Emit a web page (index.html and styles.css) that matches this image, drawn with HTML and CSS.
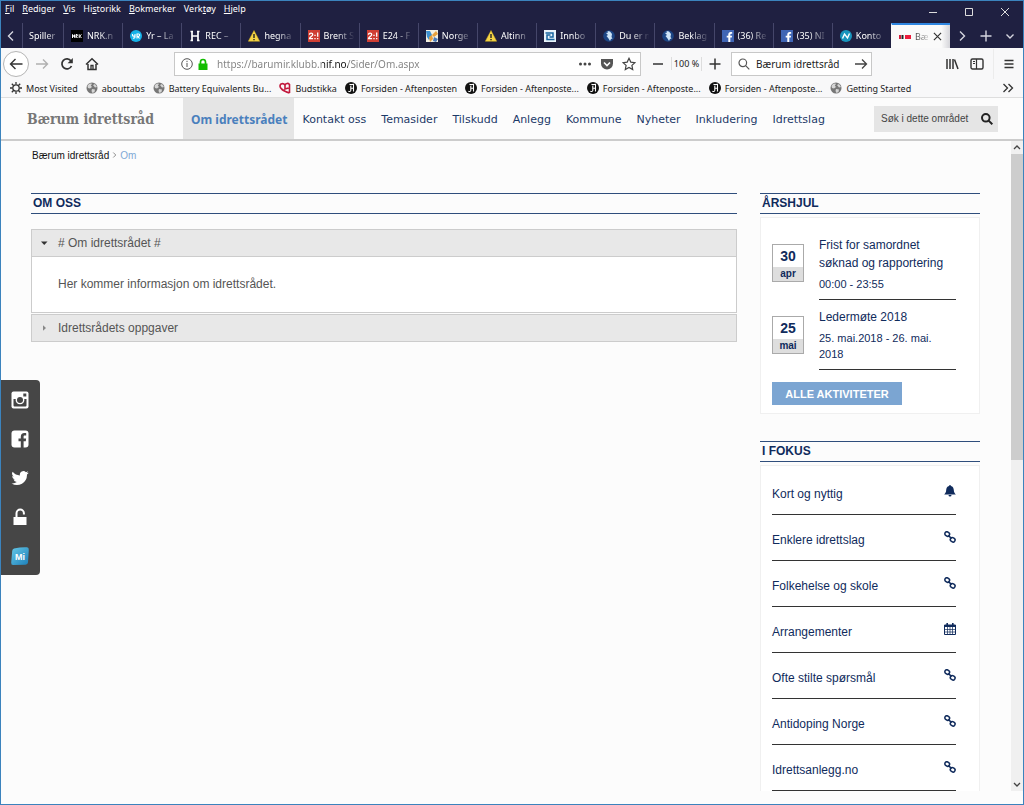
FILE: index.html
```
<!DOCTYPE html>
<html lang="no">
<head>
<meta charset="utf-8">
<title>Bærum idrettsråd</title>
<link rel="stylesheet" href="styles.css">
</head>
<body>
<svg class="defs" aria-hidden="true">
  <symbol id="warn" viewBox="0 0 12 12"><path d="M6 .5 11.7 11.3H.3z" fill="#f5d547" stroke="#cfa91c" stroke-width=".5"/><path d="M6 4v4M6 9v1.300" stroke="#222" stroke-width="1.400"/></symbol>
  <symbol id="fb" viewBox="0 0 12 12"><path d="M0 0h12v12H0z" fill="#4065b4"/><path d="M8.300 12V7.600h1.500l.300-1.800H8.300V4.700c0-.600.300-.900 1-.900h.900V2.200C9.900 2.100 9.300 2 8.700 2 7.200 2 6.300 2.900 6.300 4.500v1.300H4.700v1.800h1.600V12z" fill="#fff"/></symbol>
  <symbol id="lion" viewBox="0 0 12 12"><circle cx="6" cy="6" r="5.800" fill="#1c4584"/><path d="M4.500 1 7 1.500l2 2.500-.5 3 1 1.500-1.500.5L7 11 5.500 8.500 3.500 6 5 5 3 3 5 2.500z" fill="#cfe4f7"/></symbol>
  <symbol id="globe" viewBox="0 0 12 12"><circle cx="6" cy="6" r="5.500" fill="#777"/><path d="M1.500 4C3 1.500 5 1.200 6 2L4.800 3.500 6 5 4 6.500 2 6zM7 3l2-1 2 3-2 .5zM6 7l3 .5L8.500 10l-2 1L5.500 9z" fill="#d5d5d5"/></symbol>
  <symbol id="aften" viewBox="0 0 12 12"><circle cx="6" cy="6" r="6" fill="#111"/><path d="M4.500 2.200c1.800 1 3.800 0 4 0v7.300M5.800 4v4.500C5.500 9.800 4 9.800 3.300 9M5.800 6.200h2.500" stroke="#fff" stroke-width="1.100" fill="none"/></symbol>
  <symbol id="e24" viewBox="0 0 12 12"><path d="M0 0h12v12H0z" fill="#cf3e33"/><path d="M1.500 4.700c0-2.200 3.200-2.200 3.200 0 0 1.300-3 2.500-3.200 4H5M7 4.700v1.300M7 8v1.300M9.700 2.500v4.200M9.700 8v1.300" stroke="#fff" stroke-width="1.300" fill="none"/></symbol>
  <symbol id="chain" viewBox="0 0 12 12"><g fill="none" stroke="#102b5c" stroke-width="1.500"><rect x=".8" y="1" width="4.800" height="4" rx="1.900" transform="rotate(35 3.200 3)"/><rect x="6.300" y="6.800" width="4.800" height="4" rx="1.900" transform="rotate(35 8.700 8.800)"/><path d="m4.300 4.600 3.300 2.700"/></g></symbol>
  <symbol id="glass" viewBox="0 0 12 12"><circle cx="4.800" cy="4.800" r="3.800" fill="none" stroke="currentColor" stroke-width="var(--w,1.200)"/><path d="m7.600 7.600 3.700 3.700" stroke="currentColor" stroke-width="var(--w,1.200)"/></symbol>
</svg>
<div class="window">
  <header class="titlebar">
    <nav class="menubar">
      <a href="#"><u>F</u>il</a><a href="#"><u>R</u>ediger</a><a href="#"><u>V</u>is</a><a href="#">Hi<u>s</u>torikk</a><a href="#"><u>B</u>okmerker</a><a href="#">Verk<u>t</u>øy</a><a href="#"><u>H</u>jelp</a>
    </nav>
    <div class="wincontrols">
      <button aria-label="Minimer"><svg viewBox="0 0 10 10"><path d="M1 5.500h8"/></svg></button>
      <button aria-label="Maksimer"><svg viewBox="0 0 10 10"><path d="M1.500 1.500h7v7h-7z"/></svg></button>
      <button aria-label="Lukk"><svg viewBox="0 0 10 10"><path d="m1 1 8 8M9 1 1 9"/></svg></button>
    </div>
  </header>

  <div class="tabbar">
    <button class="scroll-left" aria-label="Rull til venstre"><svg viewBox="0 0 12 12"><path d="M8 1.500 3.500 6 8 10.500"/></svg></button>
    <a class="tab first" href="#"><span>Spiller</span></a>
    <div class="tabs">
      <a class="tab" href="#"><svg viewBox="0 0 12 12"><path d="M0 0h12v12H0z" fill="#000"/><path d="M1.500 8V4.500l2 3V4.500M5 8V4.500h1.200V6L5 6.200 6.500 8M8.200 4.300V8M10.500 4.500 8.700 6l1.800 2" stroke="#fff" fill="none"/></svg><span>NRK.n</span></a>
      <a class="tab" href="#"><svg viewBox="0 0 12 12"><circle cx="6" cy="6" r="6" fill="#16b2e8"/><path d="M2.500 4v1.500c0 1 2.500 1 2.500 0V4v3c0 1.200-1.200 1.300-2 1M7 8.500V4h1.800c1.200 0 1.200 2.200 0 2.200H7.500L9.500 8.500" stroke="#fff" fill="none" stroke-width="1.100"/></svg><span>Yr – La</span></a>
      <a class="tab" href="#"><svg viewBox="0 0 12 12"><path d="M3 1v10M9 1v10M3 6h6M1.500 1.500H4M8 1.500h2.500M1.500 10.500H4M8 10.500h2.500" stroke="#fff" stroke-width="1.700"/></svg><span>REC –</span></a>
      <a class="tab" href="#"><svg><use href="#warn"/></svg><span>hegna</span></a>
      <a class="tab" href="#"><svg><use href="#e24"/></svg><span>Brent S</span></a>
      <a class="tab" href="#"><svg><use href="#e24"/></svg><span>E24 - F</span></a>
      <a class="tab" href="#"><svg viewBox="0 0 12 12"><path d="M0 0h12v12H0z" fill="#f3efe2"/><path d="M0 1h4l2 4-3 5-2-3z" fill="#3d8fd0"/><path d="m6 5 4-4 2 3-4 3zM3 7l3-2 1 4-3 3z" fill="#e9a03c"/><path d="m8 7 4 2-2 3-3-1z" fill="#4a79b8"/></svg><span>Norge</span></a>
      <a class="tab" href="#"><svg><use href="#warn"/></svg><span>Altinn</span></a>
      <a class="tab" href="#"><svg viewBox="0 0 12 12"><path d="M0 0h12v12H0z" fill="#e9f3fa"/><path d="M1.500 3H9v4H5.500M10.500 9.500H3V5h3.500" stroke="#17649f" stroke-width="1.500" fill="none"/></svg><span>Innbo</span></a>
      <a class="tab" href="#"><svg><use href="#lion"/></svg><span>Du er n</span></a>
      <a class="tab" href="#"><svg><use href="#lion"/></svg><span>Beklag</span></a>
      <a class="tab" href="#"><svg><use href="#fb"/></svg><span>(36) Re</span></a>
      <a class="tab" href="#"><svg><use href="#fb"/></svg><span>(35) NI</span></a>
      <a class="tab" href="#"><svg viewBox="0 0 12 12"><circle cx="6" cy="6" r="6" fill="#1995bd"/><path d="M2.500 8.500 4.500 4l3 4 2-4.500" stroke="#fff" stroke-width="1.400" fill="none"/></svg><span>Konto</span></a>
      <a class="tab active" href="#"><svg viewBox="0 0 12 12"><path d="M0 4h2v4H0z" fill="#d61d3c"/><path d="M2.500 4h2v4h-2z" fill="#222"/><path d="M6 4h6v4H6z" fill="#ec1c3c"/></svg><span>Bæ</span><i class="close"><svg viewBox="0 0 10 10"><path d="m1 1 8 8M9 1 1 9"/></svg></i></a>
    </div>
    <div class="tabtools">
      <button aria-label="Rull til høyre"><svg viewBox="0 0 12 12"><path d="M4 1.500 8.500 6 4 10.500"/></svg></button>
      <button aria-label="Ny fane"><svg viewBox="0 0 12 12"><path d="M6 .5v11M.5 6h11"/></svg></button>
      <button aria-label="Alle faner"><svg viewBox="0 0 12 12"><path d="m2.500 4.500 3.500 3.500 3.500-3.500"/></svg></button>
    </div>
  </div>

  <div class="toolbar">
    <button class="back" aria-label="Tilbake"><svg viewBox="0 0 14 14"><path d="M13.500 7h-12M6.500 2l-5 5 5 5"/></svg></button>
    <button class="tool dim" aria-label="Frem"><svg viewBox="0 0 14 14"><path d="M1 7h11.500M8 2.500 12.500 7 8 11.500"/></svg></button>
    <button class="tool" aria-label="Oppdater"><svg viewBox="0 0 14 14"><path d="M11.500 9A5 5 0 1 1 11 4" stroke-width="1.700"/><path d="M12.800 1v5.200H7.600z" fill="#333" stroke="none"/></svg></button>
    <button class="tool" aria-label="Hjem"><svg viewBox="0 0 14 14"><path d="M1 7.500 7 1.800l6 5.700M3 7v5.500h8V7" stroke-width="1.500"/><path d="M6 13V8.500h2V13" stroke-width="1.300"/></svg></button>
    <div class="urlbar">
      <svg class="info" viewBox="0 0 12 12"><circle cx="6" cy="6" r="5.300"/><path d="M6 5v4M6 2.800v1.300"/></svg>
      <svg class="lock" viewBox="0 0 12 12"><path d="M1.500 5.500h9V12h-9z" fill="#12bc00"/><path d="M3.500 6V4a2.500 2.500 0 0 1 5 0v2" fill="none" stroke="#12bc00" stroke-width="1.700"/></svg>
      <input class="url" aria-label="Adresse" value="https://barumir.klubb.nif.no/Sider/Om.aspx">
      <svg class="dots" viewBox="0 0 14 14"><g fill="#444"><circle cx="2.500" cy="7" r="1.500"/><circle cx="7" cy="7" r="1.500"/><circle cx="11.500" cy="7" r="1.500"/></g></svg>
      <svg viewBox="0 0 14 14"><path d="M1 2h12v4.500a6 6 0 0 1-12 0z" fill="#555"/><path d="m4 5.500 3 3 3-3" fill="none" stroke="#fff" stroke-width="1.600"/></svg>
      <svg viewBox="0 0 14 14"><path d="m7 1.300 1.800 3.800 4.100.5-3 2.800.8 4.100L7 10.500l-3.700 2 .8-4.100-3-2.800 4.100-.5z" fill="none" stroke="#444" stroke-width="1.200"/></svg>
    </div>
    <button class="tool zoomout" aria-label="Zoom ut"><svg viewBox="0 0 14 14"><path d="M2 7h10" stroke-width="1.500"/></svg></button>
    <button class="zoomlevel">100 %</button>
    <button class="tool zoomin" aria-label="Zoom inn"><svg viewBox="0 0 14 14"><path d="M1.500 7h11M7 1.500v11" stroke-width="1.500"/></svg></button>
    <div class="searchbar">
      <svg viewBox="0 0 12 12"><use href="#glass"/></svg>
      <input aria-label="Søk" value="Bærum idrettsråd">
      <svg class="go" viewBox="0 0 14 14"><path d="M1 7h11.500M8 2.500 12.500 7 8 11.500" fill="none" stroke="#444" stroke-width="1.300"/></svg>
    </div>
    <div class="righttools">
      <button class="tool" aria-label="Bibliotek"><svg viewBox="0 0 14 14"><path d="M2 2v10M5 2v10M8 2v10M9.500 2.500 13 12" stroke-width="1.500"/></svg></button>
      <button class="tool" aria-label="Sidestolpe"><svg viewBox="0 0 14 14"><rect x="1" y="2" width="12" height="10" rx="1.500" stroke-width="1.400"/><path d="M6.500 2v10M3 4.500h2M3 6.500h2" stroke-width="1.200"/></svg></button>
      <button class="tool menu" aria-label="Meny"><svg viewBox="0 0 14 14"><path d="M2.500 3.500h9M2.500 7h9M2.500 10.500h9" stroke-width="1.300"/></svg></button>
    </div>
  </div>

  <div class="bookmarks">
    <a href="#"><svg viewBox="0 0 12 12"><circle cx="6" cy="6" r="3.200" fill="none" stroke="#333" stroke-width="1.300"/><path d="M6 0v2.500M6 9.500V12M0 6h2.500M9.500 6H12M1.800 1.800l1.700 1.700M8.500 8.500l1.700 1.700M1.800 10.200l1.700-1.700M8.500 3.500l1.700-1.700" stroke="#333" stroke-width="1.300"/></svg>Most Visited</a>
    <a href="#"><svg><use href="#globe"/></svg>abouttabs</a>
    <a href="#"><svg><use href="#globe"/></svg>Battery Equivalents Bu...</a>
    <a href="#"><svg viewBox="0 0 12 12"><path d="M10.500 11V2.500C9 .8 7 1.200 6 3 4.500 1 1 1.200 1 4.200 1 7 4 8.500 10.500 11M6 3v4l3.500-1" fill="none" stroke="#c2183c" stroke-width="1.600"/></svg>Budstikka</a>
    <a href="#"><svg><use href="#aften"/></svg>Forsiden - Aftenposten</a>
    <a href="#"><svg><use href="#aften"/></svg>Forsiden - Aftenposte...</a>
    <a href="#"><svg><use href="#aften"/></svg>Forsiden - Aftenposte...</a>
    <a href="#"><svg><use href="#aften"/></svg>Forsiden - Aftenposte...</a>
    <a href="#"><svg><use href="#globe"/></svg>Getting Started</a>
    <button class="more" aria-label="Flere bokmerker"><svg viewBox="0 0 12 12"><path d="m1.500 2 4 4-4 4M6.500 2l4 4-4 4" fill="none" stroke="#333" stroke-width="1.300"/></svg></button>
  </div>

  <div class="site">
    <header class="sitehead">
      <a class="brand" href="#">Bærum idrettsråd</a>
      <nav class="mainnav">
        <a class="current" href="#">Om idrettsrådet</a><a href="#">Kontakt oss</a><a href="#">Temasider</a><a href="#">Tilskudd</a><a href="#">Anlegg</a><a href="#">Kommune</a><a href="#">Nyheter</a><a href="#">Inkludering</a><a href="#">Idrettslag</a>
      </nav>
      <form class="sitesearch">
        <input aria-label="Søk i dette området" placeholder="Søk i dette området">
        <button type="button" aria-label="Søk"><svg viewBox="0 0 12 12"><use href="#glass"/></svg></button>
      </form>
    </header>

    <div class="scroller">
      <div class="content">
        <nav class="crumbs"><a href="#">Bærum idrettsråd</a><svg viewBox="0 0 6 8"><path d="m1.500 1 3 3-3 3"/></svg><span>Om</span></nav>
        <div class="columns">
          <main>
            <h2>OM OSS</h2>
            <div class="accordion">
              <button aria-expanded="true"><svg viewBox="0 0 8 8"><path d="M1 2.500h6.500L4.250 6z" fill="#333"/></svg># Om idrettsrådet #</button>
              <p>Her kommer informasjon om idrettsrådet.</p>
              <button aria-expanded="false"><svg viewBox="0 0 8 8"><path d="M3 1.300v5.400L6 4z" fill="#888"/></svg>Idrettsrådets oppgaver</button>
            </div>
          </main>
          <aside>
            <section>
              <h2>ÅRSHJUL</h2>
              <div class="card events">
                <div class="event">
                  <div class="date"><b>30</b><span>apr</span></div>
                  <div class="info"><a href="#">Frist for samordnet søknad og rapportering</a><span>00:00 - 23:55</span></div>
                </div>
                <div class="event">
                  <div class="date"><b>25</b><span>mai</span></div>
                  <div class="info"><a href="#">Ledermøte 2018</a><span>25. mai.2018 - 26. mai. 2018</span></div>
                </div>
                <button class="all">ALLE AKTIVITETER</button>
              </div>
            </section>
            <section>
              <h2>I FOKUS</h2>
              <div class="card focus">
                <a href="#">Kort og nyttig<svg viewBox="0 0 12 12"><path d="M6 0c.6 0 .9.400.9.900C9 1.300 9.700 3 9.800 5c.100 2.200.700 3.300 2 4.500H.2C1.500 8.300 2.100 7.200 2.200 5 2.300 3 3 1.300 5.100.9 5.100.4 5.400 0 6 0M4.500 10h3a1.500 1.600 0 0 1-3 0" fill="#102b5c"/></svg></a>
                <a href="#">Enklere idrettslag<svg><use href="#chain"/></svg></a>
                <a href="#">Folkehelse og skole<svg><use href="#chain"/></svg></a>
                <a href="#">Arrangementer<svg viewBox="0 0 12 12"><g fill="none" stroke="#102b5c"><path d="M.5 2h11v9.500H.5z"/><path d="M0 3h12" stroke-width="2"/><path d="M3.200 0v3M8.800 0v3" stroke-width="1.600"/><path d="M.5 6.500h11M.5 9h11M3.500 4v7.500M6 4v7.500M8.500 4v7.500" stroke-width=".7"/></g></svg></a>
                <a href="#">Ofte stilte spørsmål<svg><use href="#chain"/></svg></a>
                <a href="#">Antidoping Norge<svg><use href="#chain"/></svg></a>
                <a href="#">Idrettsanlegg.no<svg><use href="#chain"/></svg></a>
              </div>
            </section>
          </aside>
        </div>
      </div>
      <div class="scrollbar"><svg viewBox="0 0 8 8"><path d="m1 5.500 3-3 3 3"/></svg><div class="track"><div class="thumb"></div></div><svg viewBox="0 0 8 8"><path d="m1 2.500 3 3 3-3"/></svg></div>
    </div>
  </div>

  <nav class="social">
    <a href="#" aria-label="Instagram"><svg viewBox="0 0 18 18"><rect x=".5" y=".5" width="17" height="17" rx="2" fill="#fff"/><path d="M2.500 8h2.200a4.400 4.400 0 1 0 8.600 0h2.200v6.500a1 1 0 0 1-1 1h-11a1 1 0 0 1-1-1z" fill="#464646"/><circle cx="9" cy="9" r="3" fill="#464646"/><path d="M12.300 2.500h3v3h-3z" fill="#464646"/></svg></a>
    <a href="#" aria-label="Facebook"><svg viewBox="0 0 18 18"><rect x=".5" y=".5" width="17" height="17" rx="3" fill="#fff"/><path d="M9.800 18v-6.800H7.500V8.600h2.300V6.700c0-2.300 1.400-3.600 3.500-3.600.9 0 1.700.1 1.900.100v2.400h-1.300c-1.100 0-1.300.5-1.300 1.200v1.800h2.500l-.300 2.600h-2.200V18z" fill="#464646"/></svg></a>
    <a href="#" aria-label="Twitter"><svg viewBox="0 0 24 24"><path d="M23.600 4.900c-.8.400-1.700.6-2.700.8a4.700 4.700 0 0 0 2-2.600c-.9.500-1.900.9-3 1.100a4.700 4.700 0 0 0-8 4.300A13.400 13.400 0 0 1 2.200 3.600a4.700 4.700 0 0 0 1.500 6.300c-.8 0-1.500-.2-2.100-.6 0 2.300 1.600 4.200 3.800 4.700-.7.200-1.400.2-2.100.1a4.700 4.700 0 0 0 4.400 3.200A9.500 9.500 0 0 1 .7 19.200a13.400 13.400 0 0 0 20.600-11.900c.9-.6 1.700-1.500 2.300-2.400" fill="#fff"/></svg></a>
    <a href="#" aria-label="Logg inn"><svg viewBox="0 0 18 18"><path d="M2.500 9h13v8h-13z" fill="#fff"/><path d="M5.500 9.500V5.200a3.700 3.700 0 0 1 7.400 0v1.300" fill="none" stroke="#fff" stroke-width="2"/></svg></a>
    <a href="#" aria-label="Min idrett"><svg viewBox="0 0 18 18"><defs><linearGradient id="mi" x2="1" y2="1"><stop offset="0" stop-color="#65c8e8"/><stop offset="1" stop-color="#1d7fb8"/></linearGradient></defs><path d="M3 1.500Q10 0 16 .3 18 .5 17.800 3L17 15.500q-.2 2-2.500 2.200L2 18Q0 18 .2 15.500L1.200 4Q1.300 2 3 1.500" fill="url(#mi)"/><text x="9" y="12.500" text-anchor="middle" class="mi">Mi</text></svg></a>
  </nav>
</div>
</body>
</html>
```
FILE: styles.css
```
* { box-sizing: border-box; }
body {
  margin: 0;
  font-family: "Liberation Sans", Arial, sans-serif;
  color: #102b5c;
}
a { color: inherit; text-decoration: none; }
button, input { font: inherit; color: inherit; border: 0; background: none; padding: 0; margin: 0; min-width: 0; }
input { outline: 0; }
svg { flex: none; width: 12px; height: 12px; }
.defs { position: absolute; width: 0; height: 0; }

.window {
  position: relative;
  height: 100vh;
  display: flex;
  flex-direction: column;
  border: 1px solid #3b83bd;
  background: #fcfcfc;
  overflow: hidden;
}

/* Browser chrome */
.titlebar, .tabbar, .toolbar, .bookmarks { font-family: "Noto Sans", "Open Sans", sans-serif; font-size: 9px; flex: none; }
.titlebar { height: 22px; display: flex; justify-content: space-between; background: #1f2041; color: #fff; }
.menubar { display: flex; gap: 8px; padding-left: 4px; line-height: 15px; }
.wincontrols { display: flex; gap: 26px; padding-right: 13px; }
.wincontrols svg { display: block; width: 10px; height: 10px; fill: none; stroke: #ddd; }

.tabbar { height: 25px; display: flex; background: #1f2041; color: #fff; }
.tabbar button svg { display: block; fill: none; stroke: #d5d5df; stroke-width: 1.4; }
.scroll-left { width: 21px; padding-left: 4px; }
.tabs { flex: 1; display: flex; min-width: 0; }
.tab { flex: 1 1 0; min-width: 0; display: flex; align-items: center; gap: 4px; padding: 0 1px 0 7px; border-left: 1px solid #45466a; }
.tab span { flex: 1; overflow: hidden; white-space: nowrap; mask-image: linear-gradient(to right, #000 35%, transparent 90%); }
.tab.first { flex: 0 0 41px; padding: 0 1px 0 6px; }
.tab.first span { mask-image: linear-gradient(to right, #000 50%, transparent); }
.tab.active { background: linear-gradient(to right, #fafafa 85%, #d5d5da); color: #444; border-left-color: #fafafa; border-top: 2px solid #2f86e0; }
.tab.active span { mask-image: linear-gradient(to right, #000, transparent 120%); }
.tab .close { display: flex; margin-right: 7px; }
.tab .close svg { width: 9px; height: 9px; fill: none; stroke: #333; stroke-width: 1.3; }
.tabtools { display: flex; gap: 12px; padding: 0 7px 0 6px; align-items: center; }

.toolbar { height: 31px; display: flex; align-items: center; background: #f8f8f9; padding-left: 2px; color: #222; }
.toolbar svg { display: block; width: 14px; height: 14px; }
.tool { width: 25px; display: flex; justify-content: center; }
.tool svg, .back svg { fill: none; stroke: #333; stroke-width: 1.4; }
.tool.dim svg { stroke: #b0b0b0; }
.back { width: 26px; height: 26px; border: 1px solid #b5b5b5; border-radius: 50%; background: #fff; display: flex; align-items: center; justify-content: center; }
.urlbar, .searchbar { height: 24px; display: flex; align-items: center; border: 1px solid #c8c8c8; background: #fff; }
.urlbar { flex: 1; margin-left: 70px; padding: 0 4px 0 6px; gap: 8px; }
.urlbar .info, .urlbar .lock { width: 12px; height: 12px; }
.urlbar .lock { margin-left: -4px; }
.urlbar .info { fill: none; stroke: #555; }
.url {
  flex: 1;
  font-size: 10px;
  color: transparent;
  background: linear-gradient(to right, #808080 105px, #111 105px, #111 131px, #808080 131px);
  background-clip: text;
  -webkit-background-clip: text;
}
.tool.zoomout { width: 27px; margin-left: 3px; }
.zoomlevel { width: 30px; border-left: 1px solid #ddd; }
.tool.zoomin { width: 26px; border-left: 1px solid #ddd; }
.searchbar { width: 141px; margin-left: 4px; padding: 0 3px 0 6px; gap: 6px; }
.searchbar svg:first-child { width: 12px; height: 12px; color: #555; }
.searchbar input { flex: 1; font-size: 10px; }
.righttools { display: flex; align-items: center; margin-left: 67px; }
.tool.menu { width: 30px; height: 30px; align-items: center; border-left: 1px solid #ececec; margin-left: 4px; }

.bookmarks { height: 19px; display: flex; align-items: center; gap: 8px; padding: 0 9px; background: #f8f8f9; color: #222; white-space: nowrap; border-bottom: 1px solid #dedede; }
.bookmarks a { display: flex; align-items: center; gap: 4px; }
.bookmarks .more { margin-left: auto; display: flex; }

/* Site header */
.site { flex: 1; min-height: 0; display: flex; flex-direction: column; margin-bottom: 13px; }
.sitehead { flex: none; height: 43px; display: flex; align-items: stretch; border-bottom: 2px solid #ccc; padding-right: 25px; padding-left: 26px; }
.brand { flex: 0 0 156px; align-self: center; font-family: "DejaVu Serif Condensed", "DejaVu Serif", serif; font-weight: bold; font-size: 14px; color: #777; white-space: nowrap; }
.mainnav { flex: 1; display: flex; font-family: "DejaVu Sans", Verdana, sans-serif; font-size: 11px; }
.mainnav a { display: flex; align-items: center; padding: 2px 7px 0 8px; white-space: nowrap; color: #1c3a68; }
.mainnav .current { font-family: "Noto Sans", sans-serif; font-size: 12px; font-weight: bold; background: #e5e5e5; color: #4a80bd; }
.sitesearch { width: 124px; height: 26px; align-self: center; display: flex; align-items: center; background: #e5e5e5; padding: 0 5px 0 7px; font-size: 10px; color: #333; }
.sitesearch input { flex: 1; }
.sitesearch input::placeholder { color: #444; opacity: 1; }
.sitesearch svg { display: block; --w: 2; color: #222; }

/* Page body */
.scroller { flex: 1; min-height: 0; display: flex; }
.content { flex: 1; min-width: 0; overflow: hidden; padding: 0 31px 0 30px; }
.crumbs { display: flex; align-items: center; gap: 3px; height: 28px; padding-left: 1px; font-size: 10px; color: #111; }
.crumbs svg { width: 5px; height: 8px; fill: none; stroke: #777; }
.crumbs span { color: #7fa9d6; }
.columns { display: flex; gap: 23px; padding-top: 24px; }
main { flex: 1; min-width: 0; }
aside { flex: 0 0 220px; }
h2 { margin: 0; padding-left: 2px; height: 21px; line-height: 19px; font-size: 12px; border: 1px solid #2f4e7c; border-width: 1px 0; color: #102b5c; }

.accordion { margin-top: 15px; font-size: 12px; color: #555; }
.accordion button { width: 100%; height: 28px; display: flex; align-items: center; gap: 10px; padding-left: 8px; padding-bottom: 1px; border: 1px solid #ccc; background: #e8e8e8; }
.accordion svg { width: 8px; height: 8px; }
.accordion p { margin: 0 0 1px; padding: 20px 26px; line-height: 15px; background: #fff; border: 1px solid #ccc; border-top: 0; }

.card { margin-top: 3px; border: 1px solid #f0f0f0; background: #fff; padding: 0 23px 0 11px; }
.events { padding-top: 18px; padding-bottom: 8px; margin-bottom: 27px; }
.event { display: flex; gap: 15px; margin-bottom: 8px; }
.date { flex: none; width: 32px; height: 38px; margin-top: 8px; border: 1px solid #aaa; text-align: center; font-weight: bold; }
.date b { display: block; font-size: 14px; line-height: 22px; }
.date span { display: block; font-size: 10px; line-height: 14px; background: #dedede; }
.event .info { flex: 1; border-bottom: 1px solid #333; padding-bottom: 7px; }
.event a { display: block; font-size: 12px; line-height: 18px; }
.event .info span { display: block; font-size: 11px; line-height: 16px; margin-top: 4px; }
.all { display: block; margin-top: 12px; width: 130px; height: 23px; background: #7ba5d2; color: #fff; font-size: 11px; font-weight: bold; }

.focus { padding-top: 3px; }
.focus a { display: flex; justify-content: space-between; align-items: flex-start; height: 46px; padding-top: 16px; line-height: 18px; border-bottom: 1px solid #333; font-size: 12px; }

.scrollbar { flex: none; width: 12px; display: flex; flex-direction: column; align-items: center; background: #f0f0f0; }
.scrollbar svg { width: 8px; height: 13px; fill: none; stroke: #444; stroke-width: 1.3; }
.track { flex: 1; width: 100%; }
.thumb { height: 49%; background: #cdcdcd; }

/* Floating share rail */
.social { position: absolute; left: 0; top: 379px; width: 39px; padding: 11px 2px 10px 0; display: flex; flex-direction: column; align-items: center; gap: 21px; background: #464646; border-radius: 0 4px 4px 0; }
.social a { display: flex; }
.social svg { width: 18px; height: 18px; }
.mi { font: bold 9px "Liberation Sans", sans-serif; fill: #fff; }
```
